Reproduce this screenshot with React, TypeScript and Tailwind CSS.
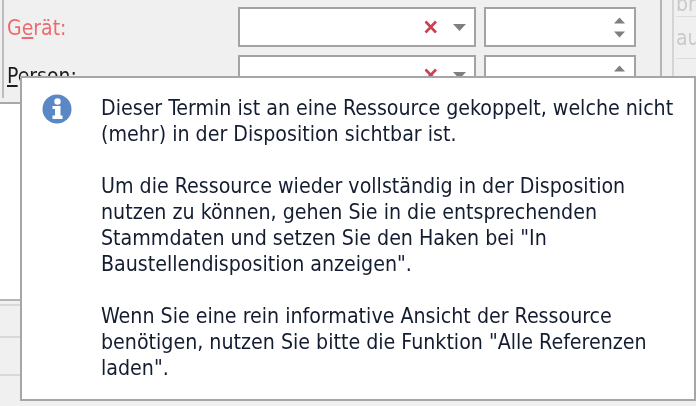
import React from 'react';

const font = { fontFamily: '"DejaVu Sans", sans-serif', fontStretch: 'condensed' };

const ClearMark = () => (
  <svg width="16" height="14" viewBox="0 0 16 14" className="shrink-0">
    <path d="M2.5 1.5 L13 12.5 M13 1.5 L2.5 12.5" stroke="#c8434f" strokeWidth="2.6" fill="none" />
  </svg>
);

const Caret = ({ up = false, width = 13 }: { up?: boolean; width?: number }) => (
  <svg width={width} height="7" viewBox="0 0 13 7" className="shrink-0">
    <path d={up ? 'M6.5 0 L13 7 L0 7 Z' : 'M0 0 L13 0 L6.5 7 Z'} fill="#7f7f7f" />
  </svg>
);

const Field = () => (
  <div className="flex h-[40px] gap-[8px]">
    <div className="flex w-[238px] items-center justify-end gap-[14px] border-2 border-[#a3a3a3] bg-white pr-[8px]">
      <ClearMark />
      <Caret />
    </div>
    <div className="flex w-[152px] flex-col items-end justify-center gap-[7px] border-2 border-[#a3a3a3] bg-white pr-[9px]">
      <Caret up width={11} />
      <Caret width={11} />
    </div>
  </div>
);

const InfoIcon = () => (
  <svg width="30" height="30" viewBox="0 0 30 30" className="shrink-0">
    <circle cx="15" cy="15" r="14.5" fill="#5a87c5" />
    <circle cx="15.5" cy="7.5" r="3.2" fill="#fff" />
    <path d="M10.5 12 H18.5 V21.5 H20.5 V25 H10.5 V21.5 H13 V15 H10.5 Z" fill="#fff" />
  </svg>
);

const paragraphs = [
  ['Dieser Termin ist an eine Ressource gekoppelt, welche nicht', '(mehr) in der Disposition sichtbar ist.'],
  [
    'Um die Ressource wieder vollständig in der Disposition',
    'nutzen zu können, gehen Sie in die entsprechenden',
    'Stammdaten und setzen Sie den Haken bei "In',
    'Baustellendisposition anzeigen".',
  ],
  [
    'Wenn Sie eine rein informative Ansicht der Ressource',
    'benötigen, nutzen Sie bitte die Funktion "Alle Referenzen',
    'laden".',
  ],
];

export default function App() {
  return (
    <div className="relative h-[406px] w-[696px] overflow-hidden bg-[#f0f0f0] blur-[0.4px]" style={font}>
      <div className="flex h-full flex-col">
        <div className="flex h-[299px]">
          <div className="flex w-[662px] shrink-0 flex-col border-r-2 border-[#b5b5b5]">
            <div className="flex h-[104px] border-b-2 border-[#a8a8a8]">
              <div className="ml-[2px] h-[98px] w-[2px] bg-[#bdbdbd]" />
              <div className="flex flex-1 flex-col gap-[8px] pt-[7px]">
                <div className="flex">
                  <div className="w-[234px] pl-[3px] pt-[9px] text-[21px] leading-[24px] text-[#ec6a6f]">
                    G<span className="underline">e</span>rät:
                  </div>
                  <Field />
                </div>
                <div className="flex">
                  <div className="w-[234px] pl-[3px] pt-[9px] text-[21px] leading-[24px] text-[#1c1c1c]">
                    <span className="underline">P</span>erson:
                  </div>
                  <Field />
                </div>
              </div>
            </div>
            <div className="flex-1 bg-white" />
          </div>
          <div className="ml-[10px] flex min-w-0 flex-1 flex-col overflow-hidden border-l-2 border-[#d4d4d4] pl-[2px] text-[21px] leading-[24px] text-[#c9c9c9]">
            <div className="h-[17px] overflow-hidden border-b border-[#dcdcdc]">
              <span className="relative -top-[8px]">br</span>
            </div>
            <div className="h-[42px] border-b border-[#dcdcdc] pt-[9px]">au</div>
            <div className="h-[40px] border-b border-[#dcdcdc]" />
          </div>
        </div>
        <div className="flex flex-1 flex-col border-t-2 border-[#b5b5b5]">
          <div className="h-[5px] border-b-2 border-[#d8d8d8]" />
          <div className="h-[32px] border-b-2 border-[#d8d8d8]" />
          <div className="h-[38px] border-b-2 border-[#d8d8d8]" />
        </div>
      </div>

      <div className="absolute left-[20px] top-[76px] flex h-[325px] w-[676px] gap-[29px] border-2 border-[#a6a6a6] bg-white pl-[20px] pt-[16px]">
        <InfoIcon />
        <div className="mt-[1px] flex flex-col gap-[26px] text-[21.2px] leading-[26px] text-[#141c30]">
          {paragraphs.map((lines, i) => (
            <div key={i}>
              {lines.map(line => (
                <div key={line} className="whitespace-nowrap">{line}</div>
              ))}
            </div>
          ))}
        </div>
      </div>
    </div>
  );
}
